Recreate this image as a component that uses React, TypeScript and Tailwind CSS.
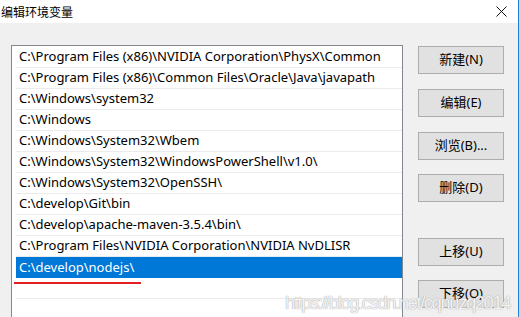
const paths = [
  "C:\\Program Files (x86)\\NVIDIA Corporation\\PhysX\\Common",
  "C:\\Program Files (x86)\\Common Files\\Oracle\\Java\\javapath",
  "C:\\Windows\\system32",
  "C:\\Windows",
  "C:\\Windows\\System32\\Wbem",
  "C:\\Windows\\System32\\WindowsPowerShell\\v1.0\\",
  "C:\\Windows\\System32\\OpenSSH\\",
  "C:\\develop\\Git\\bin",
  "C:\\develop\\apache-maven-3.5.4\\bin\\",
  "C:\\Program Files\\NVIDIA Corporation\\NVIDIA NvDLISR",
  "C:\\develop\\nodejs\\",
];

function Btn({ label, className = "" }: { label: string; className?: string }) {
  return (
    <div className={`h-[28px] w-[86px] border border-[#adadad] bg-[#e1e1e1] flex items-center justify-center text-[13px] text-black ${className}`}>
      {label}
    </div>
  );
}

export default function App() {
  return (
    <div
      className="relative w-[519px] h-[317px] overflow-hidden bg-white flex flex-col"
      style={{ fontFamily: '"Noto Sans", "Noto Sans CJK SC", sans-serif' }}
    >
      <div className="h-[23px] shrink-0 flex items-center justify-between pl-[1px] pr-[10px] bg-white border-r border-[#1883d7]">
        <span className="text-[12px] text-black" style={{ fontFamily: '"Noto Sans CJK SC", sans-serif' }}>编辑环境变量</span>
        <svg width="11" height="11" viewBox="0 0 11 11" className="mr-[1px]">
          <path d="M0.5 0.5 L10.5 10.5 M10.5 0.5 L0.5 10.5" stroke="#111" strokeWidth="1" />
        </svg>
      </div>
      <div className="flex-1 flex bg-[#f0f0f0] pl-[11px] pt-[22px] border-r border-[#1883d7]">
        <div className="w-[392px] h-[300px] border border-[#828790] bg-white pt-[1px] pl-[4px]">
          {paths.map((p, i) => {
            const sel = i === paths.length - 1;
            return (
              <div
                key={p}
                className={`relative h-[21px] flex items-center pl-[3px] text-[13px] whitespace-nowrap ${
                  sel ? "bg-[#0078d7] text-white" : "text-black border-b border-[#ebebeb]"
                }`}
              >
                {p}
                {sel && <div className="absolute left-[-2px] top-[25px] w-[127px] h-[2px] bg-[#e41e1e]" />}
              </div>
            );
          })}
          <div className="h-[21px] border-b border-[#ebebeb]" />
        </div>
        <div className="flex flex-col ml-[15px] pt-[1px]">
          <Btn label="新建(N)" />
          <Btn label="编辑(E)" className="mt-[15px]" />
          <Btn label="浏览(B)..." className="mt-[15px]" />
          <Btn label="删除(D)" className="mt-[14px]" />
          <Btn label="上移(U)" className="mt-[36px]" />
          <Btn label="下移(O)" className="mt-[14px]" />
        </div>
      </div>
      <div
        className="absolute left-[285px] top-[289px] text-[18.5px] tracking-[-1.45px] text-white/85 whitespace-nowrap"
        style={{ fontFamily: '"Liberation Sans", sans-serif', textShadow: "0 0 1px #a8a8a8, 0 0 1px #a8a8a8" }}
      >
        https://blog.csdn.net/cqnuzq2014
      </div>
    </div>
  );
}
